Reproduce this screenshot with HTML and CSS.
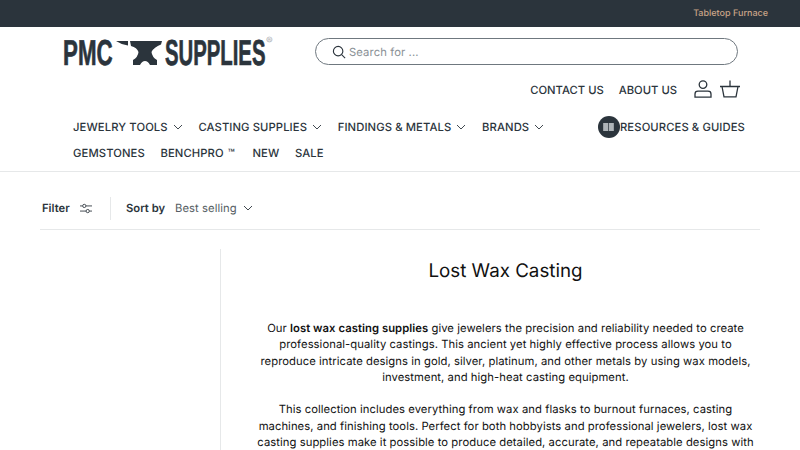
FILE: index.html
```html
<!DOCTYPE html>
<html lang="en">
<head>
    <meta charset="UTF-8">
    <meta name="viewport" content="width=device-width, initial-scale=1.0">
    <title>Lost Wax Casting</title>
    <link rel="stylesheet" href="styles.css">
</head>
<body>
<div class="announce"><a class="announce-link">Tabletop Furnace</a></div>

<header class="header">
    <div class="top-row">
        <a class="logo">
            <span class="logo-word logo-pmc">PMC</span>
            <svg class="anvil" viewBox="0 0 46 25" width="46" height="25">
                <path fill="#2b343c" d="M0 1 H12 V5.5 Q5 4.5 0 1Z M14 1 H46 L45 4.5 Q38 7 35.5 12 Q36 17 41 20 V25 H34 Q32 21 29 21 Q26 21 24 25 H17 V20 Q22 17 22.5 12 Q21 7.5 15 6 Z"/>
            </svg>
            <span class="logo-word logo-supplies">SUPPLIES</span>
            <span class="logo-reg">®</span>
        </a>
        <div class="search">
            <svg class="search-icon" viewBox="0 0 16 16" width="14" height="14">
                <circle cx="7" cy="7" r="5.4"/>
                <path d="M11 11 L15 15"/>
            </svg>
            <span class="search-text">Search for ...</span>
        </div>
    </div>

    <div class="util-row">
        <a class="util-link">CONTACT US</a>
        <a class="util-link">ABOUT US</a>
        <svg class="util-icon user-icon" viewBox="0 0 18 18" width="18" height="18">
            <circle cx="9" cy="4.6" r="3.8"/>
            <path d="M1 17.2 V14 Q1 11.2 4 11.2 H14 Q17 11.2 17 14 V17.2 Z"/>
        </svg>
        <svg class="util-icon" viewBox="0 0 20 18" width="20" height="18">
            <path d="M0 6.5 H20 M2 6.5 L4 16.8 H16 L18 6.5"/>
            <path d="M10 6.5 V0.5"/>
        </svg>
    </div>

    <nav class="nav">
        <div class="nav-row">
            <a class="nav-link">JEWELRY TOOLS <svg class="chev" viewBox="0 0 10 6"><path d="M1 1 L5 5 L9 1"/></svg></a>
            <a class="nav-link">CASTING SUPPLIES <svg class="chev" viewBox="0 0 10 6"><path d="M1 1 L5 5 L9 1"/></svg></a>
            <a class="nav-link">FINDINGS &amp; METALS <svg class="chev" viewBox="0 0 10 6"><path d="M1 1 L5 5 L9 1"/></svg></a>
            <a class="nav-link">BRANDS <svg class="chev" viewBox="0 0 10 6"><path d="M1 1 L5 5 L9 1"/></svg></a>
            <a class="nav-link resources">
                <span class="book-badge">
                    <svg viewBox="0 0 12 9" width="11" height="8"><path fill="#aeb4b8" d="M0 0 H5.6 V9 H0Z M6.4 0 H12 V9 H6.4Z"/></svg>
                </span>
                RESOURCES &amp; GUIDES
            </a>
        </div>
        <div class="nav-row">
            <a class="nav-link">GEMSTONES</a>
            <a class="nav-link">BENCHPRO <span class="tm">™</span></a>
            <a class="nav-link">NEW</a>
            <a class="nav-link">SALE</a>
        </div>
    </nav>
</header>

<div class="toolbar">
    <div class="filter">
        <span>Filter</span>
        <svg class="filter-icon" viewBox="0 0 14 12" width="12" height="11">
            <path d="M0 3 H3 M7 3 H14 M0 9 H7 M11 9 H14"/>
            <circle cx="5" cy="3" r="1.9"/>
            <circle cx="9" cy="9" r="1.9"/>
        </svg>
    </div>
    <div class="sort">
        <span class="sort-label">Sort by</span>
        <span class="sort-value">Best selling</span>
        <svg class="chev" viewBox="0 0 10 6"><path d="M1 1 L5 5 L9 1"/></svg>
    </div>
</div>

<main class="collection">
    <aside class="sidebar"></aside>
    <section class="content">
        <h1 class="title">Lost Wax Casting</h1>
        <p class="desc">
            Our <strong>lost wax casting supplies</strong> give jewelers the precision and reliability needed to create professional-quality castings. This ancient yet highly effective process allows you to reproduce intricate designs in gold, silver, platinum, and other metals by using wax models, investment, and high-heat casting equipment.
            <br><br>
            This collection includes everything from wax and flasks to burnout furnaces, casting machines, and finishing tools. Perfect for both hobbyists and professional jewelers, lost wax casting supplies make it possible to produce detailed, accurate, and repeatable designs with
        </p>
    </section>
</main>
</body>
</html>
```

FILE: styles.css
```css
*{
    box-sizing: border-box;
}
html, body{
    height: 450px;
    overflow: hidden;
}
body{
    margin: 0;
    font-family: Inter, "Liberation Sans", sans-serif;
    text-rendering: geometricPrecision;
    color: #2b343c;
    background-color: #fff;
}

/* top bar */
.announce{
    height: 27px;
    padding-right: 32px;
    display: flex;
    align-items: center;
    justify-content: flex-end;
    background-color: #2b343c;
}
.announce-link{
    font-size: 9px;
    font-weight: 500;
    color: #c8a387;
}

/* header */
.header{
    height: 145px;
    padding-top: 11px;
    border-bottom: 1px solid #e6e8e9;
}
.top-row{
    height: 27px;
    display: flex;
    padding-left: 63px;
}
.logo{
    width: 252px;
    display: flex;
    align-items: center;
    position: relative;
}
.logo-word{
    font-family: "Liberation Sans", sans-serif;
    font-weight: 700;
    font-size: 36px;
    line-height: 27px;
    display: inline-block;
    flex: none;
    margin-top: 1px;
    transform-origin: left center;
    -webkit-text-stroke: .7px #2b343c;
}
.logo-pmc{
    width: 53px;
    transform: scaleX(.62);
}
.logo-supplies{
    width: 102px;
    margin-left: 3px;
    transform: scaleX(.564);
}
.anvil{
    flex: none;
    margin-top: 1px;
}
.logo-reg{
    position: absolute;
    left: 203px;
    top: -3px;
    font-size: 10px;
    color: #a6abaf;
}
.search{
    width: 423px;
    height: 27px;
    padding-left: 16px;
    display: flex;
    align-items: center;
    gap: 3px;
    border: 1px solid #6f787f;
    border-radius: 14px;
}
.search-icon{
    fill: none;
    stroke: #2b343c;
    stroke-width: 1.3;
}
.search-text{
    font-size: 11.25px;
    line-height: 14px;
    padding-top: 1px;
    letter-spacing: .1px;
    color: #8a9196;
}
.util-row{
    height: 20px;
    margin-top: 14px;
    padding-right: 60px;
    display: flex;
    align-items: center;
    justify-content: flex-end;
}
.util-link{
    font-size: 11.25px;
    font-weight: 500;
    padding-top: 1px;
    margin-right: 15px;
}
.util-link + .util-link{
    margin-right: 17px;
}
.util-icon{
    fill: none;
    stroke: #2b343c;
    stroke-width: 1.3;
}
.user-icon{
    margin-right: 8px;
}

/* nav */
.nav{
    margin-top: 15px;
    padding: 0 55px 0 73px;
}
.nav-row{
    display: flex;
    align-items: center;
    gap: 15.6px;
    height: 26px;
}
.nav-link{
    font-size: 11.25px;
    font-weight: 500;
    letter-spacing: .1px;
    white-space: nowrap;
}
.tm{
    margin: 0 2px 0 1px;
}
.chev{
    width: 10px;
    height: 6px;
    margin-left: 2px;
    vertical-align: 1px;
    fill: none;
    stroke: #2b343c;
    stroke-width: .9;
}
.resources{
    margin-left: auto;
    display: flex;
    align-items: center;
}
.book-badge{
    width: 22px;
    height: 22px;
    border-radius: 50%;
    display: flex;
    align-items: center;
    justify-content: center;
    background-color: #2b343c;
}

/* filter bar */
.toolbar{
    height: 58px;
    margin: 0 40px;
    padding: 15px 2px 0;
    display: flex;
    align-items: center;
    border-bottom: 1px solid #e6e8e9;
    font-size: 11.25px;
}
.filter{
    width: 69px;
    height: 23px;
    display: flex;
    align-items: center;
    gap: 10px;
    font-weight: 600;
    border-right: 1px solid #e6e8e9;
}
.filter-icon{
    fill: none;
    stroke: #2b343c;
    stroke-width: 1;
}
.sort{
    margin-left: 15px;
    display: flex;
    align-items: center;
}
.sort-label{
    font-weight: 600;
}
.sort-value{
    margin-left: 10px;
    letter-spacing: .05px;
    color: #565e64;
}
.sort .chev{
    margin-left: 6px;
}

/* collection */
.collection{
    margin-top: 19px;
    padding-left: 220px;
    padding-right: 40px;
    display: flex;
}
.sidebar{
    width: 1px;
    height: 220px;
    background-color: #e6e8e9;
}
.content{
    flex: 1;
    padding: 0 5px 0 35px;
    text-align: center;
    color: #111;
}
.title{
    margin: 10px 0 0;
    font-size: 18.75px;
    font-weight: 400;
    line-height: 24px;
}
.desc{
    margin: 37px 0 0;
    font-size: 11.25px;
    line-height: 16.25px;
    letter-spacing: .06px;
}
.desc strong{
    font-weight: 600;
}
```
